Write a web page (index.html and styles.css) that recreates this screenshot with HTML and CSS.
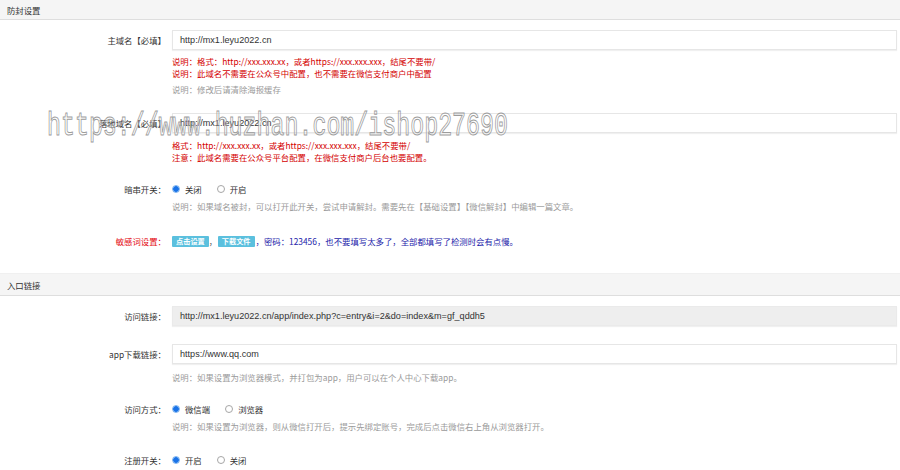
FILE: index.html
```html
<!DOCTYPE html>
<html lang="zh-CN">
<head>
<meta charset="utf-8">
<title>防封设置</title>
<link rel="stylesheet" href="styles.css">
</head>
<body>
<div class="page">
  <div class="panel-head first">防封设置</div>
  <div class="panel-body first-body">
    <div class="group g1">
      <label class="lbl">主域名【必填】</label>
      <div class="ctl">
        <div class="input">http://mx1.leyu2022.cn</div>
        <div class="help red top5">说明：格式：http://xxx.xxx.xx，或者https://xxx.xxx.xxx，结尾不要带/</div>
        <div class="help red">说明：此域名不需要在公众号中配置，也不需要在微信支付商户中配置</div>
        <div class="help gray top4">说明：修改后请清除海报缓存</div>
      </div>
    </div>
    <div class="group g2">
      <label class="lbl">落地域名【必填】</label>
      <div class="ctl">
        <div class="input">http://mx1.leyu2022.cn</div>
        <div class="help red top6">格式：http://xxx.xxx.xx，或者https://xxx.xxx.xxx，结尾不要带/</div>
        <div class="help red">注意：此域名需要在公众号平台配置，在微信支付商户后台也要配置。</div>
      </div>
    </div>
    <div class="group g3">
      <label class="lbl lbl-line">暗串开关：</label>
      <div class="ctl">
        <div class="radios">
          <span class="radio on"></span><span class="rtxt">关闭</span>
          <span class="radio"></span><span class="rtxt">开启</span>
        </div>
        <div class="help gray top5">说明：如果域名被封，可以打开此开关，尝试申请解封。需要先在【基础设置】【微信解封】中编辑一篇文章。</div>
      </div>
    </div>
    <div class="group g4">
      <label class="lbl lbl-line warn">敏感词设置：</label>
      <div class="ctl">
        <div class="btnline">
          <span class="btn">点击设置</span><span class="sep">，</span><span class="btn">下载文件</span><span class="blue">，密码：123456，也不要填写太多了，全部都填写了检测时会有点慢。</span>
        </div>
      </div>
    </div>
  </div>

  <div class="panel-head second">入口链接</div>
  <div class="panel-body">
    <div class="group g5">
      <label class="lbl">访问链接：</label>
      <div class="ctl">
        <div class="input readonly">http://mx1.leyu2022.cn/app/index.php?c=entry&amp;i=2&amp;do=index&amp;m=gf_qddh5</div>
      </div>
    </div>
    <div class="group g6">
      <label class="lbl">app下载链接：</label>
      <div class="ctl">
        <div class="input">https://www.qq.com</div>
        <div class="help gray top7">说明：如果设置为浏览器模式，并打包为app，用户可以在个人中心下载app。</div>
      </div>
    </div>
    <div class="group g7">
      <label class="lbl lbl-line">访问方式：</label>
      <div class="ctl">
        <div class="radios">
          <span class="radio on"></span><span class="rtxt">微信端</span>
          <span class="radio"></span><span class="rtxt">浏览器</span>
        </div>
        <div class="help gray top5">说明：如果设置为浏览器，则从微信打开后，提示先绑定账号，完成后点击微信右上角从浏览器打开。</div>
      </div>
    </div>
    <div class="group g8">
      <label class="lbl lbl-line">注册开关：</label>
      <div class="ctl">
        <div class="radios">
          <span class="radio on"></span><span class="rtxt">开启</span>
          <span class="radio"></span><span class="rtxt">关闭</span>
        </div>
      </div>
    </div>
  </div>

  <svg class="watermark" width="480" height="44" viewBox="0 0 480 44">
    <text x="2" y="24.2" transform="scale(1 1.45)" textLength="461" lengthAdjust="spacingAndGlyphs">https://www.huzhan.com/ishop27690</text>
  </svg>
</div>
</body>
</html>
```

FILE: styles.css
```css
* { box-sizing: border-box; }
html, body { margin: 0; padding: 0; background: #fff; }
body {
  font-family: "Noto Sans CJK SC", "Liberation Sans", sans-serif;
  font-size: 8.4px;
  color: #333;
  width: 900px;
  height: 470px;
  overflow: hidden;
}
.page { position: relative; width: 900px; }

.panel-head {
  background: #f5f5f5;
  border-bottom: 1px solid #dedede;
  padding-left: 7px;
  color: #333;
  display: flex;
  align-items: center;
}
.panel-head.first { height: 20px; }
.panel-head.second {
  height: 23px;
  margin-top: 26px;
  border-top: 1px solid #f0f0f0;
}

.panel-body { padding-right: 3px; }
.first-body { padding-top: 10px; }
.panel-head.second + .panel-body { padding-top: 10px; }

.group { display: flex; align-items: flex-start; }
.g2 { margin-top: 18px; }
.g3 { margin-top: 20px; }
.g4 { margin-top: 23px; }
.g6 { margin-top: 18px; }
.g7 { margin-top: 20px; }
.g8 { margin-top: 22px; }

.lbl {
  width: 166px;
  flex: none;
  text-align: right;
  line-height: 20px;
  color: #333;
}
.lbl-line { line-height: 12px; }
.warn { color: #e4090f; }

.ctl { flex: 1; margin-left: 6px; min-width: 0; }

.input {
  height: 20px;
  border: 1px solid #e6e6e6;
  box-shadow: 0 1px 1px rgba(0,0,0,0.06);
  padding-left: 7px;
  font-family: "Liberation Sans", "Noto Sans CJK SC", sans-serif;
  font-size: 9.1px;
  line-height: 18px;
  color: #333;
  background: #fff;
}
.input.readonly { background: #eeeeee; border-color: #eaeaea; }

.help { line-height: 12px; white-space: nowrap; }
.help.red { color: #d40000; }
.help.gray { color: #9a9a9a; }
.top4 { margin-top: 4px; }
.top5 { margin-top: 5px; }
.top6 { margin-top: 6px; }
.top7 { margin-top: 7px; }

.radios { display: flex; align-items: center; height: 12px; }
.radio {
  width: 8px;
  height: 8px;
  border-radius: 50%;
  border: 1px solid #a6a6a6;
  background: #fff;
  flex: none;
}
.radio.on {
  border: 1px solid #7db3f0;
  background: radial-gradient(circle, #1a73e8 0 2.6px, #7db3f0 3px);
}
.rtxt { margin-left: 5px; margin-right: 15px; color: #333; }

.btnline { display: flex; align-items: center; height: 12px; white-space: nowrap; }
.btn {
  background: #5bc0de;
  color: #fff;
  font-size: 7.2px;
  font-weight: bold;
  height: 11px;
  line-height: 11px;
  padding: 0 4px;
  border-radius: 1px;
}
.sep { width: 9px; color: #555; }
.blue { color: #2323aa; margin-left: 1px; }

.watermark {
  position: absolute;
  left: 45px;
  top: 100px;
  overflow: visible;
  pointer-events: none;
}
.watermark text {
  font-family: "Liberation Mono", monospace;
  font-size: 23.4px;
  fill: rgba(255,255,255,0.2);
  stroke: #9c9c9c;
  stroke-width: 0.7px;
}
```
